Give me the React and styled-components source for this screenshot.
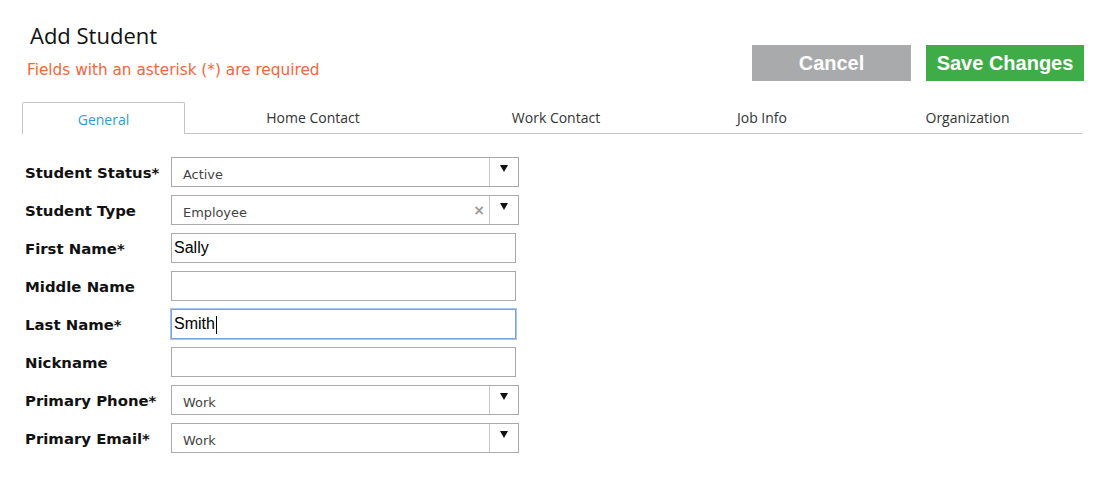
import React from "react";
import styled, { createGlobalStyle } from "styled-components";

const GlobalStyle = createGlobalStyle`
  body {
    margin: 0;
    background: #ffffff;
    font-family: "DejaVu Sans", Verdana, sans-serif;
  }
`;

const Page = styled.div`
  width: 1117px;
  height: 484px;
  box-sizing: border-box;
  padding: 0 35px 0 22px;
`;

const Header = styled.div`
  display: flex;
  justify-content: space-between;
  align-items: flex-start;
  height: 102px;
`;

const TitleBlock = styled.div`
  padding-top: 20px;
`;

const Title = styled.h1`
  margin: 0 0 0 8px;
  font-family: "Open Sans", "Noto Sans", sans-serif;
  font-weight: 400;
  font-size: 22px;
  line-height: 30px;
  color: #111;
`;

const Required = styled.div`
  margin: 11px 0 0 5px;
  font-family: "DejaVu Sans", Verdana, sans-serif;
  font-size: 15.3px;
  color: #f0673a;
`;

const Actions = styled.div`
  display: flex;
  gap: 15px;
  margin-top: 45px;
  margin-right: -2px;
`;

const Button = styled.button`
  width: ${p => p.width}px;
  height: 36px;
  border: none;
  padding: 0;
  background: ${p => (p.primary ? "#3ead48" : "#a9aaac")};
  color: #fff;
  font-family: "Liberation Sans", Arial, sans-serif;
  font-weight: 700;
  font-size: 20px;
  cursor: pointer;
`;

const Tabs = styled.div`
  display: flex;
  height: 31px;
  border-bottom: 1px solid #c4c4c4;
`;

const Tab = styled.div`
  width: ${p => p.width}px;
  box-sizing: border-box;
  display: flex;
  align-items: center;
  justify-content: center;
  font-family: "Open Sans", "Noto Sans", sans-serif;
  font-size: 14px;
  color: ${p => (p.active ? "#2b9dd1" : "#333")};
  background: #fff;
  ${p =>
    p.active &&
    `
    border: 1px solid #c4c4c4;
    border-bottom: none;
    border-radius: 2px 2px 0 0;
    margin-bottom: -1px;
    padding-top: 1px;
  `}
`;

const Form = styled.div`
  display: flex;
  flex-direction: column;
  gap: 8px;
  padding: 23px 0 0 3px;
`;

const Row = styled.div`
  display: flex;
  align-items: center;
  height: 30px;
`;

const Label = styled.label`
  width: 146px;
  padding-top: 2px;
  font-family: "DejaVu Sans", Verdana, sans-serif;
  font-weight: 700;
  font-size: 14.9px;
  color: #111;
`;

const SelectBox = styled.div`
  width: 348px;
  height: 30px;
  box-sizing: border-box;
  border: 1px solid #aaa;
  display: flex;
  align-items: stretch;
  background: #fff;
`;

const SelectValue = styled.div`
  flex: 1;
  padding: 5px 0 0 11px;
  font-family: "DejaVu Sans", Verdana, sans-serif;
  font-size: 12.9px;
  color: #444;
  display: flex;
  align-items: center;
`;

const Clear = styled.span`
  width: 20px;
  display: flex;
  align-items: center;
  justify-content: center;
  color: #999;
  font-size: 14px;
  font-weight: 700;
  font-family: "DejaVu Sans", sans-serif;
`;

const Arrow = styled.div`
  width: 29px;
  border-left: 1px solid #c8c8c8;
  display: flex;
  justify-content: center;
  padding-top: 7px;
  box-sizing: border-box;
`;

const InputWrap = styled.div`
  position: relative;
`;

const TextInput = styled.input`
  width: 345px;
  height: 30px;
  box-sizing: border-box;
  border: 1px solid ${p => (p.focused ? "#7da2e0" : "#aaa")};
  box-shadow: ${p => (p.focused ? "0 0 0 1px #a9c4ef" : "none")};
  padding: 0 2px;
  font-family: "Liberation Sans", Arial, sans-serif;
  font-size: 16px;
  color: #000;
  outline: none;
`;

const TextCaret = styled.span`
  position: absolute;
  left: ${p => p.left}px;
  top: 7px;
  width: 1px;
  height: 18px;
  background: #000;
`;

const Caret = () => (
  <svg width="8" height="7" viewBox="0 0 8 7">
    <path d="M0 0 H8 L4 7 Z" fill="#111" />
  </svg>
);

const Select = ({ value, clearable }) => (
  <SelectBox>
    <SelectValue>{value}</SelectValue>
    {clearable && <Clear>×</Clear>}
    <Arrow>
      <Caret />
    </Arrow>
  </SelectBox>
);

const tabs = [
  { label: "General", width: 163, active: true },
  { label: "Home Contact", width: 256 },
  { label: "Work Contact", width: 230 },
  { label: "Job Info", width: 182 },
  { label: "Organization", width: 229 },
];

const fields = [
  { label: "Student Status*", type: "select", value: "Active" },
  { label: "Student Type", type: "select", value: "Employee", clearable: true },
  { label: "First Name*", type: "text", value: "Sally" },
  { label: "Middle Name", type: "text", value: "" },
  { label: "Last Name*", type: "text", value: "Smith", focused: true },
  { label: "Nickname", type: "text", value: "" },
  { label: "Primary Phone*", type: "select", value: "Work" },
  { label: "Primary Email*", type: "select", value: "Work" },
];

export default function App() {
  return (
    <>
      <GlobalStyle />
      <Page>
        <Header>
          <TitleBlock>
            <Title>Add Student</Title>
            <Required>Fields with an asterisk (*) are required</Required>
          </TitleBlock>
          <Actions>
            <Button width={159}>Cancel</Button>
            <Button width={158} primary>
              Save Changes
            </Button>
          </Actions>
        </Header>
        <Tabs>
          {tabs.map(t => (
            <Tab key={t.label} width={t.width} active={t.active}>
              {t.label}
            </Tab>
          ))}
        </Tabs>
        <Form>
          {fields.map(f => (
            <Row key={f.label}>
              <Label>{f.label}</Label>
              {f.type === "select" ? (
                <Select value={f.value} clearable={f.clearable} />
              ) : (
                <InputWrap>
                  <TextInput
                    defaultValue={f.value}
                    focused={f.focused}
                    readOnly
                  />
                  {f.focused && <TextCaret left={45} />}
                </InputWrap>
              )}
            </Row>
          ))}
        </Form>
      </Page>
    </>
  );
}
